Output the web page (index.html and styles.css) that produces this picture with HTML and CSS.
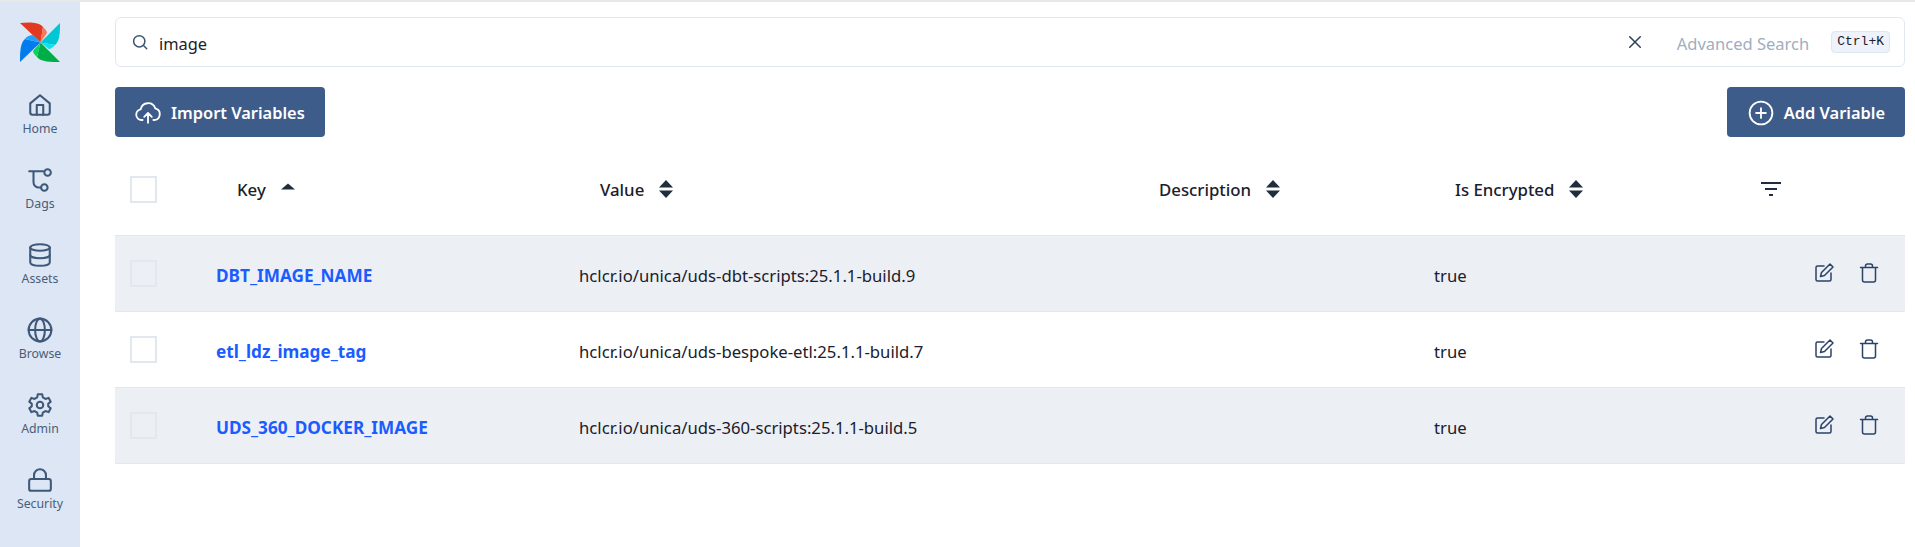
FILE: index.html
```html
<!DOCTYPE html>
<html lang="en">
<head>
  <meta charset="UTF-8">
  <meta name="viewport" content="width=device-width, initial-scale=1.0">
  <title>Variables</title>
  <link rel="stylesheet" href="styles.css">
</head>
<body>
  <div class="app">
    <!-- Sidebar -->
    <aside class="sidebar">
      <svg class="logo" viewBox="0 0 40 40" width="40" height="40">
        <path d="M0 1 C9 0 19 0 23 5 L20.5 20.5 Z" fill="#e43921"/>
        <path d="M23 5 C25 7 27 9 27 11 L20.5 20.5 Z" fill="#ff7557"/>
        <path d="M40 1 C40 9 40 19 35 23 L20.5 20.5 Z" fill="#00c7d4"/>
        <path d="M35 23 C33 25 31 27 29 27 L20.5 20.5 Z" fill="#11e1ee"/>
        <path d="M40 40 C31 40 21 40 17 35 L20.5 20.5 Z" fill="#00ad46"/>
        <path d="M17 35 C15 33 13 31 13 29 L20.5 20.5 Z" fill="#04d659"/>
        <path d="M0 40 C0 31 0 21 5 17 L20.5 20.5 Z" fill="#017cee"/>
        <path d="M5 17 C7 14 10 13 13 13 L20.5 20.5 Z" fill="#1aa3ff"/>
      </svg>
      <a class="nav-item" href="#">
        <svg class="nav-icon" viewBox="0 0 24 24"><path d="M3 10.500 12 3l9 7.500V19a2 2 0 0 1-2 2H5a2 2 0 0 1-2-2z"/><path d="M9 21v-9h6v9"/></svg>
        <span>Home</span>
      </a>
      <a class="nav-item" href="#">
        <svg class="nav-icon" viewBox="0 0 24 24"><path d="M2 4h13M6 4v10a5 5 0 0 0 5 5h2"/><circle cx="19" cy="5" r="3"/><circle cx="16" cy="19" r="3"/></svg>
        <span>Dags</span>
      </a>
      <a class="nav-item" href="#">
        <svg class="nav-icon" viewBox="0 0 24 24"><ellipse cx="12" cy="5" rx="9" ry="3"/><path d="M3 5v14c0 1.700 4 3 9 3s9-1.300 9-3V5"/><path d="M3 12c0 1.700 4 3 9 3s9-1.300 9-3"/></svg>
        <span>Assets</span>
      </a>
      <a class="nav-item" href="#">
        <svg class="nav-icon" viewBox="0 0 24 24"><circle cx="12" cy="12" r="10.500"/><path d="M1.500 12h21"/><ellipse cx="12" cy="12" rx="4.500" ry="10.500"/></svg>
        <span>Browse</span>
      </a>
      <a class="nav-item" href="#">
        <svg class="nav-icon" viewBox="0 0 24 24"><path d="M10 2h4l.6 3 2.400 1.400 2.900-1 2 3.500-2.300 2v2.200l2.300 2-2 3.500-2.900-1L14.600 19l-.6 3h-4l-.6-3L7 17.600l-2.900 1-2-3.500 2.300-2v-2.200l-2.300-2 2-3.500 2.900 1L9.400 5z"/><circle cx="12" cy="12" r="3"/></svg>
        <span>Admin</span>
      </a>
      <a class="nav-item" href="#">
        <svg class="nav-icon" viewBox="0 0 24 24"><rect x="2" y="11" width="20" height="11" rx="2"/><path d="M6.500 11V7.500a5.500 5.500 0 0 1 11 0V11"/></svg>
        <span>Security</span>
      </a>
    </aside>

    <main class="content">
      <!-- Search -->
      <div class="search-bar">
        <svg class="search-icon" viewBox="0 0 24 24"><circle cx="11" cy="11" r="7.500"/><path d="m17 17 4 4"/></svg>
        <span class="search-text">image</span>
        <svg class="clear-icon" viewBox="0 0 24 24"><path d="M5 5l14 14M19 5 5 19"/></svg>
        <span class="advanced">Advanced Search</span>
        <kbd class="shortcut">Ctrl+K</kbd>
      </div>

      <!-- Actions -->
      <div class="actions">
        <a class="btn" href="#">
          <svg class="btn-icon" viewBox="0 0 24 24"><path d="M7 18.500H6a5 5 0 0 1-.8-9.900 7 7 0 0 1 13.500-.9A5.500 5.500 0 0 1 18 18.500h-1"/><path d="M12 21v-9M8.500 15.500 12 12l3.500 3.500"/></svg>
          Import Variables
        </a>
        <a class="btn btn-add" href="#">
          <svg class="btn-icon" viewBox="0 0 24 24"><circle cx="12" cy="12" r="10.500"/><path d="M12 7.500v9M7.500 12h9"/></svg>
          Add Variable
        </a>
      </div>

      <!-- Variables table -->
      <table class="var-table">
        <colgroup>
          <col class="col-check">
          <col class="col-key">
          <col class="col-value">
          <col class="col-desc">
          <col class="col-enc">
          <col class="col-actions">
        </colgroup>
        <thead>
          <tr>
            <th><span class="checkbox"></span></th>
            <th><span class="th-label">Key <svg class="sort" viewBox="0 0 14 18"><path d="M7 3.500 14 9.500H0z"/></svg></span></th>
            <th><span class="th-label">Value <svg class="sort" viewBox="0 0 14 18"><path d="M7 0 14 7.500H0zM7 18 0 10.500h14z"/></svg></span></th>
            <th><span class="th-label">Description <svg class="sort" viewBox="0 0 14 18"><path d="M7 0 14 7.500H0zM7 18 0 10.500h14z"/></svg></span></th>
            <th><span class="th-label">Is Encrypted <svg class="sort" viewBox="0 0 14 18"><path d="M7 0 14 7.500H0zM7 18 0 10.500h14z"/></svg></span></th>
            <th><span class="th-label"><svg class="filter" viewBox="0 0 20 14"><path d="M0 1h20M4 7h12M8 13h4"/></svg></span></th>
          </tr>
        </thead>
        <tbody>
          <tr class="striped">
            <td><span class="checkbox"></span></td>
            <td class="text-cell"><a class="key-link" href="#">DBT_IMAGE_NAME</a></td>
            <td class="text-cell">hclcr.io/unica/uds-dbt-scripts:25.1.1-build.9</td>
            <td></td>
            <td class="text-cell">true</td>
            <td>
              <div class="row-actions">
                <svg class="row-icon" viewBox="0 0 20 20"><path d="M10 3H3.500A1.500 1.500 0 0 0 2 4.500v12A1.500 1.500 0 0 0 3.500 18h12a1.500 1.500 0 0 0 1.500-1.500V10"/><path d="M6.500 13.500l1-4L16 1l3 3-8.500 8.500z"/></svg>
                <svg class="row-icon" viewBox="0 0 20 20"><path d="M1.500 4.500h17M3.500 4.500V17a2 2 0 0 0 2 2h9a2 2 0 0 0 2-2V4.500M6.500 4.500V3a2 2 0 0 1 2-2h3a2 2 0 0 1 2 2v1.500"/></svg>
              </div>
            </td>
          </tr>
          <tr>
            <td><span class="checkbox"></span></td>
            <td class="text-cell"><a class="key-link" href="#">etl_ldz_image_tag</a></td>
            <td class="text-cell">hclcr.io/unica/uds-bespoke-etl:25.1.1-build.7</td>
            <td></td>
            <td class="text-cell">true</td>
            <td>
              <div class="row-actions">
                <svg class="row-icon" viewBox="0 0 20 20"><path d="M10 3H3.500A1.500 1.500 0 0 0 2 4.500v12A1.500 1.500 0 0 0 3.500 18h12a1.500 1.500 0 0 0 1.500-1.500V10"/><path d="M6.500 13.500l1-4L16 1l3 3-8.500 8.500z"/></svg>
                <svg class="row-icon" viewBox="0 0 20 20"><path d="M1.500 4.500h17M3.500 4.500V17a2 2 0 0 0 2 2h9a2 2 0 0 0 2-2V4.500M6.500 4.500V3a2 2 0 0 1 2-2h3a2 2 0 0 1 2 2v1.500"/></svg>
              </div>
            </td>
          </tr>
          <tr class="striped">
            <td><span class="checkbox"></span></td>
            <td class="text-cell"><a class="key-link" href="#">UDS_360_DOCKER_IMAGE</a></td>
            <td class="text-cell">hclcr.io/unica/uds-360-scripts:25.1.1-build.5</td>
            <td></td>
            <td class="text-cell">true</td>
            <td>
              <div class="row-actions">
                <svg class="row-icon" viewBox="0 0 20 20"><path d="M10 3H3.500A1.500 1.500 0 0 0 2 4.500v12A1.500 1.500 0 0 0 3.500 18h12a1.500 1.500 0 0 0 1.500-1.500V10"/><path d="M6.500 13.500l1-4L16 1l3 3-8.500 8.500z"/></svg>
                <svg class="row-icon" viewBox="0 0 20 20"><path d="M1.500 4.500h17M3.500 4.500V17a2 2 0 0 0 2 2h9a2 2 0 0 0 2-2V4.500M6.500 4.500V3a2 2 0 0 1 2-2h3a2 2 0 0 1 2 2v1.500"/></svg>
              </div>
            </td>
          </tr>
        </tbody>
      </table>
    </main>
  </div>
</body>
</html>
```

FILE: styles.css
```css
/* Base Styling */
* {
  margin: 0;
  padding: 0;
  box-sizing: border-box;
}

body {
  font-family: "Noto Sans", Arial, sans-serif;
  background-color: #fff;
  color: #1a202c;
  font-size: 16px;
  height: 100vh;
  overflow: hidden;
}

.app {
  display: flex;
  height: 100vh;
  border-top: 2px solid #e8e8e6;
}

/* Sidebar */
.sidebar {
  width: 80px;
  flex-shrink: 0;
  background-color: #dce6f4;
  display: flex;
  flex-direction: column;
  align-items: center;
  padding-top: 20px;
}

.logo {
  display: block;
  margin-bottom: 28px;
}

.nav-item {
  display: flex;
  flex-direction: column;
  align-items: center;
  height: 75px;
  color: #4a5d78;
  text-decoration: none;
  font-size: 12.3px;
  line-height: 18px;
}

.nav-icon {
  width: 26px;
  height: 26px;
  margin-top: 2px;
  margin-bottom: 2px;
  fill: none;
  stroke: #3e5878;
  stroke-width: 1.900;
  stroke-linecap: round;
  stroke-linejoin: round;
}

/* Main Content */
.content {
  flex: 1;
  padding: 15px 10px 0 35px;
}

.search-bar {
  display: flex;
  align-items: center;
  height: 50px;
  border: 1px solid #e2e8f0;
  border-radius: 6px;
  padding: 0 14px 0 15px;
}

.search-icon {
  width: 18px;
  height: 18px;
  margin-right: 10px;
  fill: none;
  stroke: #3e5570;
  stroke-width: 2;
  stroke-linecap: round;
}

.search-text {
  flex: 1;
  font-size: 16.4px;
  padding-top: 2px;
}

.clear-icon {
  width: 18px;
  height: 18px;
  margin-right: 33px;
  fill: none;
  stroke: #2d3f5c;
  stroke-width: 2;
  stroke-linecap: round;
}

.advanced {
  color: #a0aec0;
  font-size: 16.5px;
  margin-right: 22px;
  padding-top: 2px;
}

.shortcut {
  font-family: "Liberation Mono", monospace;
  font-size: 13px;
  line-height: 20px;
  height: 22px;
  padding: 0 5px;
  background-color: #edf2fb;
  border: 1px solid #dde6f2;
  border-radius: 4px;
}

.actions {
  display: flex;
  justify-content: space-between;
  margin-top: 20px;
}

.btn {
  display: flex;
  align-items: center;
  height: 50px;
  padding: 0 20px;
  background-color: #3e5c8a;
  color: #fff;
  border-radius: 4px;
  text-decoration: none;
  font-size: 16.4px;
  font-weight: 600;
  padding-top: 1px;
}

.btn-icon {
  width: 26px;
  height: 26px;
  margin-right: 10px;
  fill: none;
  stroke: #fff;
  stroke-width: 1.700;
  stroke-linecap: round;
  stroke-linejoin: round;
}

.btn-add {
  padding-left: 21px;
}

/* Table */
.var-table {
  width: 100%;
  border-collapse: collapse;
  table-layout: fixed;
}

.col-check { width: 86px; }
.col-key { width: 363px; }
.col-value { width: 559px; }
.col-desc { width: 296px; }
.col-enc { width: 306px; }
.col-actions { width: 180px; }

.var-table th {
  height: 98px;
  text-align: left;
  font-weight: 500;
  font-size: 16.800px;
  padding-left: 15px;
  padding-top: 7px;
  border-bottom: 1px solid #e2e8f0;
}

.th-label {
  display: flex;
  align-items: center;
  gap: 15px;
  padding-left: 21px;
}

.sort {
  width: 14px;
  height: 18px;
  fill: #1f2d3d;
}

.filter {
  width: 20px;
  height: 14px;
  fill: none;
  stroke: #1f2d3d;
  stroke-width: 2;
}

.var-table td {
  height: 76px;
  padding-left: 15px;
  border-bottom: 1px solid #e2e8f0;
  font-size: 16.700px;
}

.var-table .text-cell {
  padding-top: 4px;
}

.striped {
  background-color: #eceff4;
}

.checkbox {
  display: block;
  width: 27px;
  height: 27px;
  border: 2px solid #e2e8f0;
}

.key-link {
  color: #1a5cff;
  text-decoration: none;
  font-weight: 700;
  font-size: 17.200px;
}

.row-actions {
  display: flex;
  justify-content: flex-end;
  gap: 25px;
  padding-right: 26px;
}

.row-icon {
  width: 20px;
  height: 20px;
  fill: none;
  stroke: #2b4369;
  stroke-width: 1.500;
  stroke-linecap: round;
  stroke-linejoin: round;
}
```
